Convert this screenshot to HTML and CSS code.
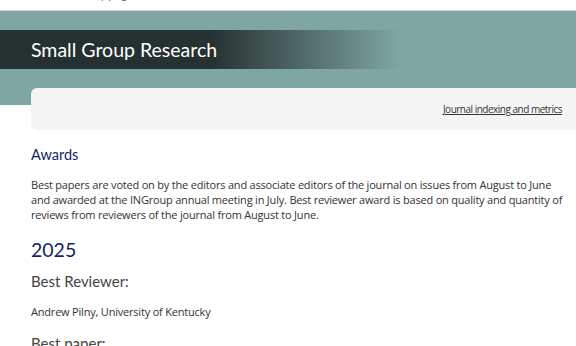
FILE: index.html
```html
<!DOCTYPE html>
<html lang="en">
  <head>
    <meta charset="UTF-8" />
    <title>Small Group Research - Awards</title>
    <link rel="stylesheet" href="styles.css">
  </head>
  <body>
    <div class="topbar">
      <span class="crumb">Journal | page</span>
    </div>
    <header class="banner">
      <div class="title-band">
        <h1>Small Group Research</h1>
      </div>
    </header>
    <nav class="subnav">
      <a href="#">Journal indexing and metrics</a>
    </nav>
    <main class="content">
      <h2 class="section-title">Awards</h2>
      <p>
        Best papers are voted on by the editors and associate editors of the journal on issues from August to June
        and awarded at the INGroup annual meeting in July. Best reviewer award is based on quality and quantity of
        reviews from reviewers of the journal from August to June.
      </p>
      <h2 class="year">2025</h2>
      <h3>Best Reviewer:</h3>
      <p class="name">Andrew Pilny, University of Kentucky</p>
      <h3>Best paper:</h3>
    </main>
  </body>
</html>
```

FILE: styles.css
```css
body {
  margin: 0;
  padding: 0;
  font-family: "Open Sans", "Noto Sans", sans-serif;
  color: #333;
  background: #fff;
  overflow: hidden;
}
.topbar {
  height: 10px;
  overflow: hidden;
  display: flex;
  align-items: flex-end;
  padding: 0 0 0 60px;
  border-bottom: 1px solid #d4d4d4;
}
.crumb {
  font-size: 11px;
  line-height: 13px;
  color: #555;
  margin-bottom: 10px;
}
.banner {
  background-color: #7fa7a2;
  padding: 19px 0 36px;
}
.title-band {
  height: 39px;
  display: flex;
  align-items: center;
  padding-left: 31px;
  width: 370px;
  background: linear-gradient(to right, #253030 0%, #253030 52%, rgba(37, 48, 48, 0) 100%);
}
.title-band h1 {
  margin: 0;
  font-family: "Lato", sans-serif;
  font-weight: 400;
  font-size: 19.5px;
  color: #fff;
}
.subnav {
  margin: -17px 0 0 31px;
  height: 42px;
  background-color: #f5f5f5;
  border-radius: 6px 0 0 6px;
  display: flex;
  align-items: center;
  justify-content: flex-end;
  padding-right: 14px;
}
.subnav a {
  font-size: 10px;
  letter-spacing: -0.5px;
  color: #333;
  text-decoration: underline;
}
.content {
  padding: 16px 10px 0 31px;
}
.section-title {
  margin: 0 0 14px;
  font-family: "Lato", sans-serif;
  font-weight: 400;
  font-size: 14.5px;
  color: #0f1f6e;
}
.content p {
  margin: 0;
  font-size: 11px;
  letter-spacing: -0.2px;
  line-height: 15px;
}
.year {
  margin: 16px 0 11px;
  font-family: "Lato", sans-serif;
  font-weight: 400;
  font-size: 19.5px;
  color: #0f1f6e;
}
h3 {
  margin: 0 0 14px;
  font-family: "Lato", sans-serif;
  font-weight: 400;
  font-size: 15px;
  color: #444;
}
.content p.name {
  margin-bottom: 15px;
}
```
